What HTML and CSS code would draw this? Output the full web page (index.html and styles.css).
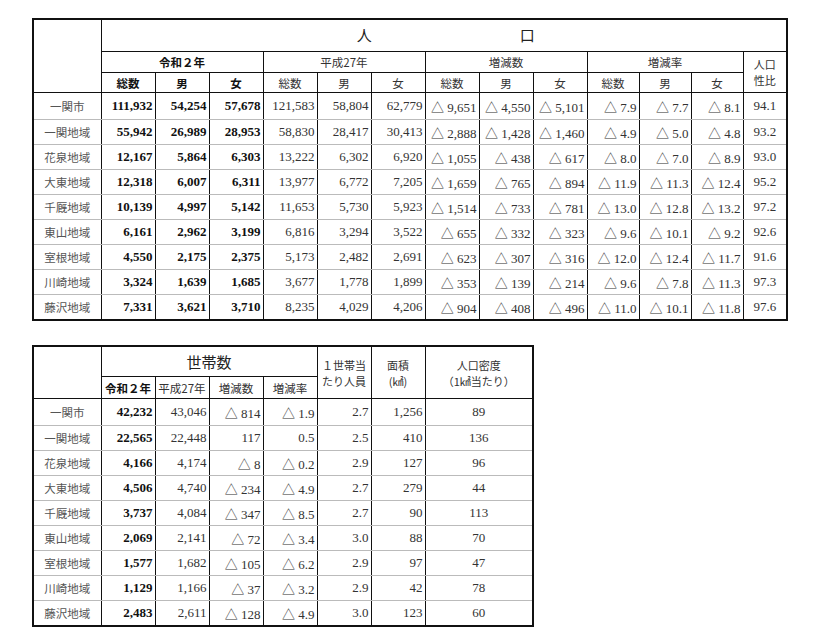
FILE: index.html
```html
<!DOCTYPE html>
<html lang="ja">
<head>
<meta charset="utf-8">
<title>人口・世帯数</title>
<link rel="stylesheet" href="styles.css">
</head>
<body>
<div class="page">
<table class="tbl pop">
<colgroup>
<col class="w-label"><col class="w54"><col class="w54"><col class="w54"><col class="w54"><col class="w54"><col class="w54"><col class="w54"><col class="w54"><col class="w54"><col class="w52"><col class="w52"><col class="w52"><col class="w44">
</colgroup>
<tr class="h1"><th rowspan="3"></th><th colspan="13" class="title"><span class="tt"><span>人</span><span>口</span></span></th></tr>
<tr class="h2"><th colspan="3" class="b">令和２年</th><th colspan="3">平成27年</th><th colspan="3">増減数</th><th colspan="3">増減率</th><th rowspan="2" class="two">人口<br>性比</th></tr>
<tr class="h3"><th class="b">総数</th><th class="b">男</th><th class="b">女</th><th>総数</th><th>男</th><th>女</th><th>総数</th><th>男</th><th>女</th><th>総数</th><th>男</th><th>女</th></tr>
<tr class="r1"><td class="lb">一関市</td><td class="b">111,932</td><td class="b">54,254</td><td class="b">57,678</td><td>121,583</td><td>58,804</td><td>62,779</td><td>△ 9,651</td><td>△ 4,550</td><td>△ 5,101</td><td>△ 7.9</td><td>△ 7.7</td><td>△ 8.1</td><td class="c">94.1</td></tr>
<tr><td class="lb">一関地域</td><td class="b">55,942</td><td class="b">26,989</td><td class="b">28,953</td><td>58,830</td><td>28,417</td><td>30,413</td><td>△ 2,888</td><td>△ 1,428</td><td>△ 1,460</td><td>△ 4.9</td><td>△ 5.0</td><td>△ 4.8</td><td class="c">93.2</td></tr>
<tr><td class="lb">花泉地域</td><td class="b">12,167</td><td class="b">5,864</td><td class="b">6,303</td><td>13,222</td><td>6,302</td><td>6,920</td><td>△ 1,055</td><td>△ 438</td><td>△ 617</td><td>△ 8.0</td><td>△ 7.0</td><td>△ 8.9</td><td class="c">93.0</td></tr>
<tr><td class="lb">大東地域</td><td class="b">12,318</td><td class="b">6,007</td><td class="b">6,311</td><td>13,977</td><td>6,772</td><td>7,205</td><td>△ 1,659</td><td>△ 765</td><td>△ 894</td><td>△ 11.9</td><td>△ 11.3</td><td>△ 12.4</td><td class="c">95.2</td></tr>
<tr><td class="lb">千厩地域</td><td class="b">10,139</td><td class="b">4,997</td><td class="b">5,142</td><td>11,653</td><td>5,730</td><td>5,923</td><td>△ 1,514</td><td>△ 733</td><td>△ 781</td><td>△ 13.0</td><td>△ 12.8</td><td>△ 13.2</td><td class="c">97.2</td></tr>
<tr><td class="lb">東山地域</td><td class="b">6,161</td><td class="b">2,962</td><td class="b">3,199</td><td>6,816</td><td>3,294</td><td>3,522</td><td>△ 655</td><td>△ 332</td><td>△ 323</td><td>△ 9.6</td><td>△ 10.1</td><td>△ 9.2</td><td class="c">92.6</td></tr>
<tr><td class="lb">室根地域</td><td class="b">4,550</td><td class="b">2,175</td><td class="b">2,375</td><td>5,173</td><td>2,482</td><td>2,691</td><td>△ 623</td><td>△ 307</td><td>△ 316</td><td>△ 12.0</td><td>△ 12.4</td><td>△ 11.7</td><td class="c">91.6</td></tr>
<tr><td class="lb">川崎地域</td><td class="b">3,324</td><td class="b">1,639</td><td class="b">1,685</td><td>3,677</td><td>1,778</td><td>1,899</td><td>△ 353</td><td>△ 139</td><td>△ 214</td><td>△ 9.6</td><td>△ 7.8</td><td>△ 11.3</td><td class="c">97.3</td></tr>
<tr><td class="lb">藤沢地域</td><td class="b">7,331</td><td class="b">3,621</td><td class="b">3,710</td><td>8,235</td><td>4,029</td><td>4,206</td><td>△ 904</td><td>△ 408</td><td>△ 496</td><td>△ 11.0</td><td>△ 10.1</td><td>△ 11.8</td><td class="c">97.6</td></tr>
</table>

<table class="tbl hh">
<colgroup>
<col class="w-label"><col class="w54"><col class="w54"><col class="w54"><col class="w54"><col class="w54"><col class="w54"><col class="w108">
</colgroup>
<tr class="k1"><th rowspan="2"></th><th colspan="4" class="title2">世帯数</th><th rowspan="2" class="two">１世帯当<br>たり人員</th><th rowspan="2" class="two">面積<br>(㎢)</th><th rowspan="2" class="two">人口密度<br>（1㎢当たり）</th></tr>
<tr class="k2"><th class="b">令和２年</th><th>平成27年</th><th>増減数</th><th>増減率</th></tr>
<tr class="r1"><td class="lb">一関市</td><td class="b">42,232</td><td>43,046</td><td>△ 814</td><td>△ 1.9</td><td>2.7</td><td>1,256</td><td class="c">89</td></tr>
<tr><td class="lb">一関地域</td><td class="b">22,565</td><td>22,448</td><td>117</td><td>0.5</td><td>2.5</td><td>410</td><td class="c">136</td></tr>
<tr><td class="lb">花泉地域</td><td class="b">4,166</td><td>4,174</td><td>△ 8</td><td>△ 0.2</td><td>2.9</td><td>127</td><td class="c">96</td></tr>
<tr><td class="lb">大東地域</td><td class="b">4,506</td><td>4,740</td><td>△ 234</td><td>△ 4.9</td><td>2.7</td><td>279</td><td class="c">44</td></tr>
<tr><td class="lb">千厩地域</td><td class="b">3,737</td><td>4,084</td><td>△ 347</td><td>△ 8.5</td><td>2.7</td><td>90</td><td class="c">113</td></tr>
<tr><td class="lb">東山地域</td><td class="b">2,069</td><td>2,141</td><td>△ 72</td><td>△ 3.4</td><td>3.0</td><td>88</td><td class="c">70</td></tr>
<tr><td class="lb">室根地域</td><td class="b">1,577</td><td>1,682</td><td>△ 105</td><td>△ 6.2</td><td>2.9</td><td>97</td><td class="c">47</td></tr>
<tr><td class="lb">川崎地域</td><td class="b">1,129</td><td>1,166</td><td>△ 37</td><td>△ 3.2</td><td>2.9</td><td>42</td><td class="c">78</td></tr>
<tr><td class="lb">藤沢地域</td><td class="b">2,483</td><td>2,611</td><td>△ 128</td><td>△ 4.9</td><td>3.0</td><td>123</td><td class="c">60</td></tr>
</table>
</div>
</body>
</html>
```

FILE: styles.css
```css
html, body {
  margin: 0;
  background: #ffffff;
}
body {
  font-family: "Liberation Serif", "Noto Sans CJK JP", serif;
  color: #222;
}
.page {
  padding: 18px 0 0 32px;
  display: flex;
  flex-direction: column;
  align-items: flex-start;
  gap: 24px;
}
.tbl {
  border-collapse: collapse;
  table-layout: fixed;
  border: 2px solid #111;
}
.pop { width: 755px; }
.hh { width: 501px; }
.w-label { width: 68px; }
.w54 { width: 54px; }
.w52 { width: 52px; }
.w44 { width: 44px; }
.w108 { width: 108px; }

.tbl th {
  border: 1px solid #111;
  padding: 0;
  font-family: "Noto Sans CJK JP", sans-serif;
  font-weight: 400;
  font-size: 11.5px;
  color: #333;
  text-align: center;
  vertical-align: middle;
  line-height: 14px;
}
.tbl th.b { font-weight: 700; color: #111; }
.tbl th.two {
  font-size: 11px;
  line-height: 16px;
}
.tbl td {
  border-left: 1px solid #111;
  border-right: 1px solid #111;
  border-top: 1px solid #bbb;
  border-bottom: 1px solid #bbb;
  padding: 0 2px 0 0;
  font-size: 13px;
  color: #333;
  text-align: right;
  vertical-align: middle;
  white-space: nowrap;
  height: 24px;
}
.tbl td.b { font-weight: 700; color: #111; }
.tbl td.c { text-align: center; padding: 0; }
.tbl td.lb {
  font-family: "Noto Sans CJK JP", sans-serif;
  font-size: 11.5px;
  color: #555;
  text-align: center;
  padding: 0;
}
.tbl tr.r1 td { border-top: 1px solid #111; height: 26px; }

.h1 th { height: 31px; }
.h2 th { height: 20px; }
.h3 th { height: 19px; }
.title { font-size: 15px; }
.tt {
  display: inline-flex;
  gap: 148px;
  font-size: 15px;
  color: #222;
  margin-left: 4px;
}
.k1 th { height: 29px; }
.k2 th { height: 21px; }
.tbl th.title2 { font-size: 15px; color: #222; }
```
